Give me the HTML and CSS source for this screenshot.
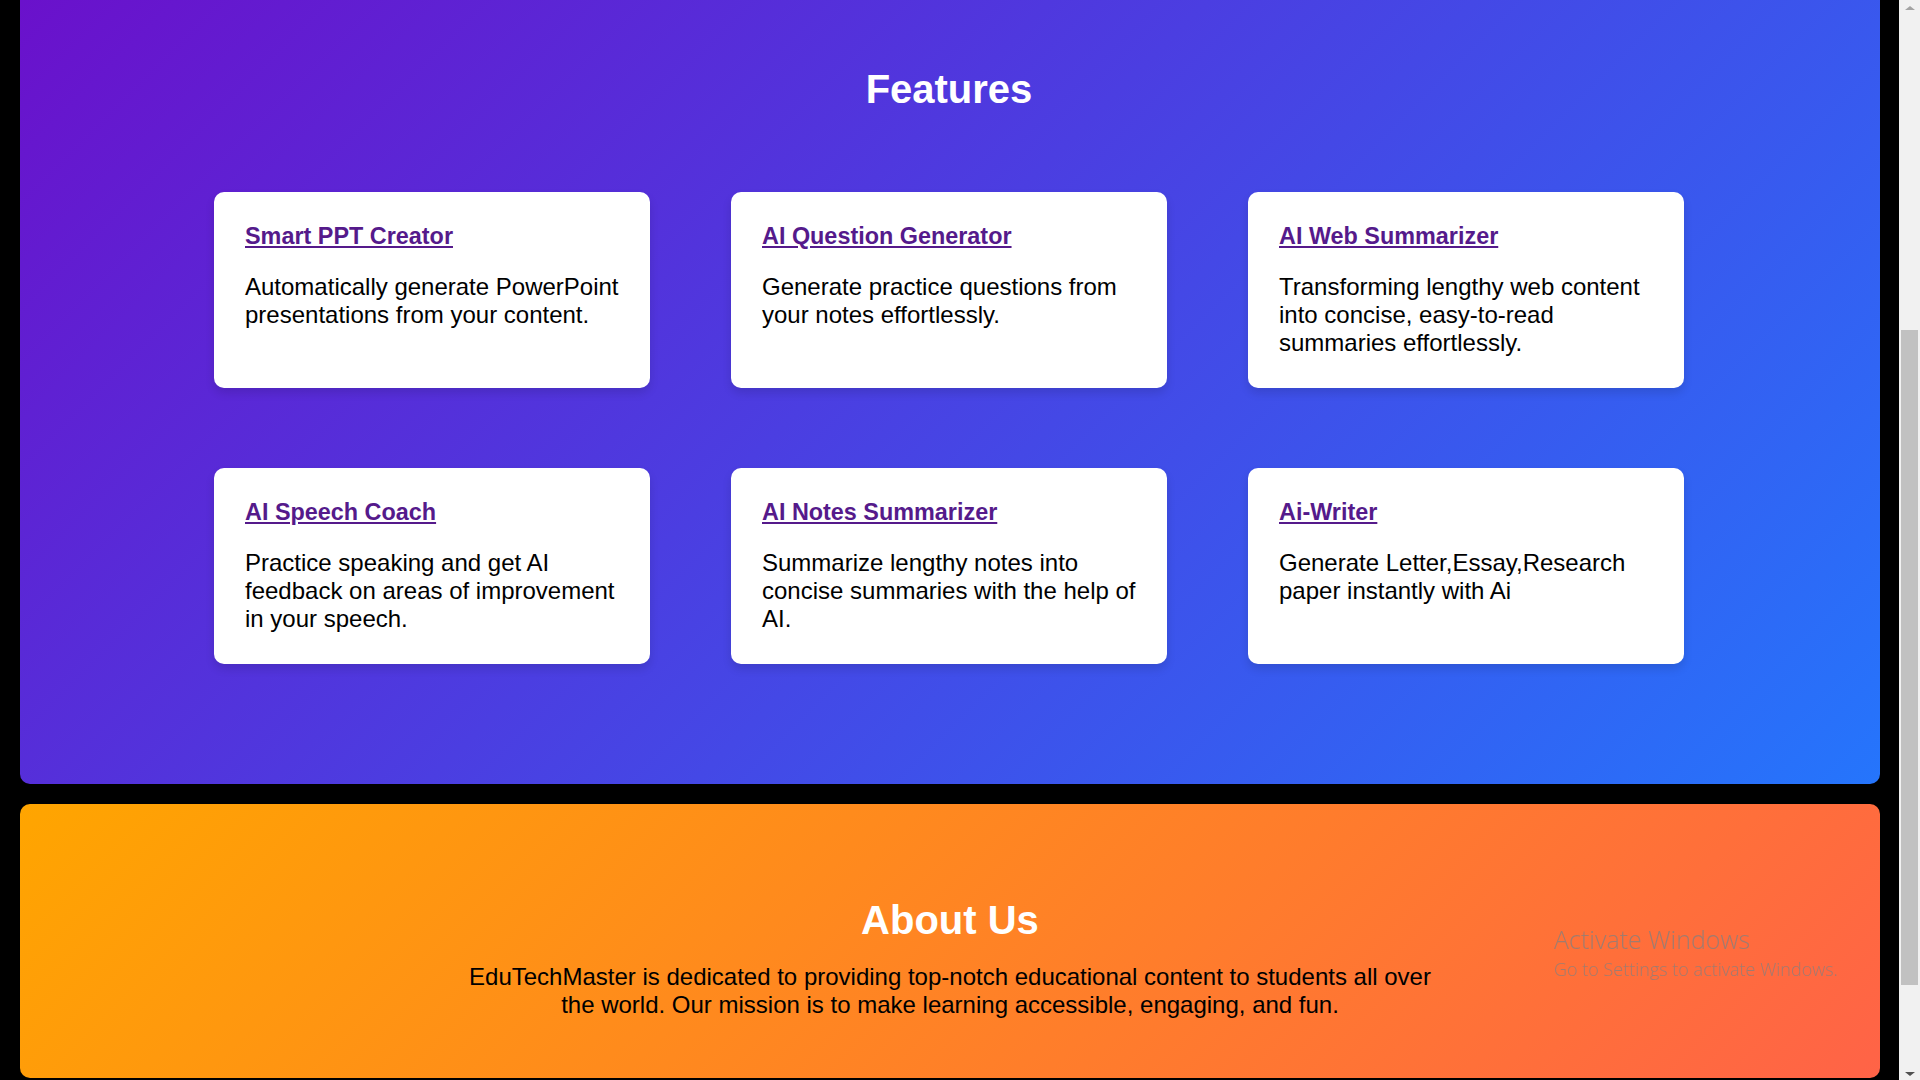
FILE: index.html
```html
<!DOCTYPE html>
<html lang="en">
<head>
<meta charset="utf-8">
<title>EduTechMaster</title>
<link rel="stylesheet" href="styles.css">
</head>
<body>
<main class="page">
  <section class="features">
    <h2 class="section-title">Features</h2>
    <div class="feature-grid">
      <div class="card">
        <h3 class="card-title"><a href="#">Smart PPT Creator</a></h3>
        <p class="card-text">Automatically generate PowerPoint presentations from your content.</p>
      </div>
      <div class="card">
        <h3 class="card-title"><a href="#">AI Question Generator</a></h3>
        <p class="card-text">Generate practice questions from your notes effortlessly.</p>
      </div>
      <div class="card">
        <h3 class="card-title"><a href="#">AI Web Summarizer</a></h3>
        <p class="card-text">Transforming lengthy web content into concise, easy-to-read summaries effortlessly.</p>
      </div>
      <div class="card">
        <h3 class="card-title"><a href="#">AI Speech Coach</a></h3>
        <p class="card-text">Practice speaking and get AI feedback on areas of improvement in your speech.</p>
      </div>
      <div class="card">
        <h3 class="card-title"><a href="#">AI Notes Summarizer</a></h3>
        <p class="card-text">Summarize lengthy notes into concise summaries with the help of AI.</p>
      </div>
      <div class="card">
        <h3 class="card-title"><a href="#">Ai-Writer</a></h3>
        <p class="card-text">Generate Letter,Essay,Research paper instantly with Ai</p>
      </div>
    </div>
  </section>
  <section class="about">
    <h2 class="section-title about-title">About Us</h2>
    <p class="about-text">EduTechMaster is dedicated to providing top-notch educational content to students all over the world. Our mission is to make learning accessible, engaging, and fun.</p>
  </section>
</main>
<aside class="scrollbar">
  <div class="sb-arrow sb-up"></div>
  <div class="sb-track"><div class="sb-thumb"></div></div>
  <div class="sb-arrow sb-down"></div>
</aside>
<div class="watermark">
  <div class="wm-title">Activate Windows</div>
  <div class="wm-sub">Go to Settings to activate Windows.</div>
</div>
</body>
</html>
```
FILE: styles.css
```css
html, body {
  margin: 0;
  padding: 0;
  height: 1080px;
  overflow: hidden;
}
body {
  background: #000;
  display: flex;
  font-family: "Liberation Sans", Arial, sans-serif;
  color: #000;
}
.page {
  flex: 1;
  padding: 0 19px 0 20px;
  display: flex;
  flex-direction: column;
}
.features {
  background: linear-gradient(135deg, #6a11cb, #2575fc);
  border-radius: 0 0 10px 10px;
  padding: 67px 2px 120px 0;
}
.section-title {
  margin: 0;
  font-size: 40px;
  font-weight: bold;
  color: #fff;
  text-align: center;
}
.features .section-title {
  margin-bottom: 80px;
}
.feature-grid {
  display: grid;
  grid-template-columns: repeat(3, 436px);
  column-gap: 81px;
  row-gap: 80px;
  justify-content: center;
}
.card {
  background: #fff;
  border-radius: 10px;
  padding: 31px 30px 31px 31px;
  box-shadow: 0 5px 10px rgba(0, 0, 0, 0.12);
}
.card-title {
  margin: 0;
  font-size: 23.4px;
  font-weight: bold;
}
.card-title a {
  color: #551a8b;
  text-decoration: underline;
}
.card-text {
  margin: 23px 0 0;
  font-size: 24px;
}
.about {
  margin-top: 20px;
  background: linear-gradient(135deg, #ffa500, #ff6347);
  border-radius: 10px;
  padding: 94px 0 59px;
}
.about-title {
  margin-bottom: 20px;
}
.about-text {
  margin: 0 auto;
  max-width: 980px;
  font-size: 24px;
  text-align: center;
}
.scrollbar {
  width: 21px;
  background: #f1f1f1;
  display: flex;
  flex-direction: column;
  align-items: center;
}
.sb-arrow {
  width: 0;
  height: 0;
  border-left: 5px solid transparent;
  border-right: 5px solid transparent;
}
.sb-up {
  margin-top: 6px;
  border-bottom: 4px solid #a3a3a3;
}
.sb-down {
  margin-bottom: 4px;
  border-top: 4px solid #505050;
}
.sb-track {
  flex: 1;
  width: 100%;
  display: flex;
  justify-content: center;
}
.sb-thumb {
  margin-top: 320px;
  width: 17px;
  height: 655px;
  background: #c1c1c1;
}
.watermark {
  position: fixed;
  left: 1554px;
  top: 922px;
  font-family: "Open Sans", "Noto Sans", sans-serif;
  color: rgba(128, 128, 128, 0.75);
  pointer-events: none;
}
.wm-title {
  font-size: 25px;
  font-weight: 300;
  line-height: 34px;
}
.wm-sub {
  font-size: 18px;
  font-weight: 300;
  line-height: 26px;
}
```
